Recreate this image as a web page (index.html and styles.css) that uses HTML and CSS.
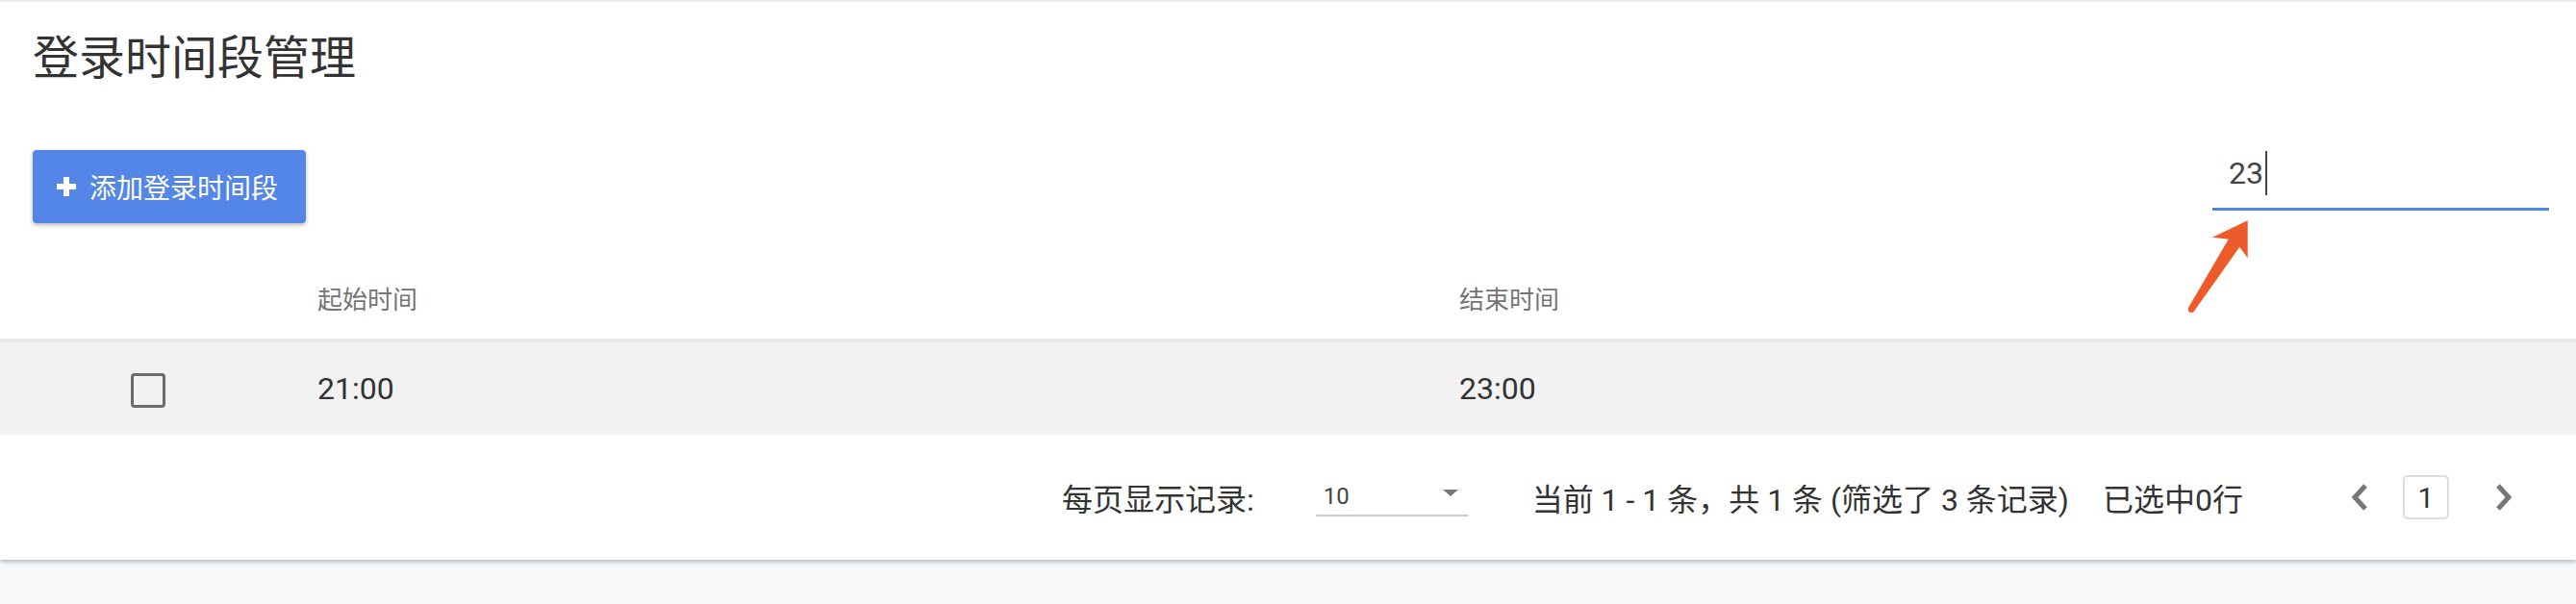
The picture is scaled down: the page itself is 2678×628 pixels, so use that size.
FILE: index.html
```html
<!DOCTYPE html>
<html lang="zh-CN">
<head>
<meta charset="utf-8">
<title>登录时间段管理</title>
<link rel="stylesheet" href="styles.css">
</head>
<body>
<div class="page">
  <section class="card">
    <h1 class="title">登录时间段管理</h1>
    <div class="toolbar">
      <button class="btn-add" type="button">
        <svg class="plus" width="20" height="20" viewBox="0 0 20 20"><path d="M7 0h6v7h7v6h-7v7H7v-7H0V7h7z" fill="#fff"/></svg>
        <span>添加登录时间段</span>
      </button>
      <div class="search">
        <span class="search-text">23</span><span class="caret"></span>
      </div>
    </div>

    <div class="table">
      <div class="thead">
        <div class="cell cell-check"></div>
        <div class="cell cell-text">起始时间</div>
        <div class="cell cell-text">结束时间</div>
      </div>
      <div class="trow">
        <div class="cell cell-check"><span class="checkbox"></span></div>
        <div class="cell cell-text">21:00</div>
        <div class="cell cell-text">23:00</div>
      </div>
    </div>

    <div class="footer">
      <span class="per-page">每页显示记录:</span>
      <div class="select"><span>10</span><span class="tri"></span></div>
      <span class="info">当前 1 - 1 条，共 1 条 (筛选了 3 条记录)</span>
      <span class="selected">已选中0行</span>
      <button class="nav prev" type="button"><svg width="20" height="30" viewBox="0 0 20 30"><polyline points="16,3 5,15 16,27" fill="none" stroke="#777" stroke-width="5"/></svg></button>
      <span class="page-num">1</span>
      <button class="nav next" type="button"><svg width="20" height="30" viewBox="0 0 20 30"><polyline points="4,3 15,15 4,27" fill="none" stroke="#777" stroke-width="5"/></svg></button>
    </div>

    <svg class="arrow" width="80" height="110" viewBox="0 0 80 110">
      <path d="M66.7 4.3 L30 21.7 L46.7 23.7 L5 95 Q4 99.5 8 100 Q10 100 11 98.5 L58.3 31.7 L66.7 43.3 Z" fill="#ee5a2a"/>
    </svg>
  </section>
</div>
</body>
</html>
```

FILE: styles.css
```css
* { box-sizing: border-box; }

html, body {
  margin: 0;
  padding: 0;
  background: #f7f8fa;
  font-family: Roboto, "Noto Sans CJK SC", sans-serif;
  color: #333;
}

.page {
  min-height: 628px;
  background: #f7f8fa;
}

.card {
  position: relative;
  background: #fff;
  border-top: 2px solid #ebebeb;
  box-shadow: 0 2px 4px rgba(0, 0, 0, 0.28);
}

.title {
  margin: 0;
  padding: 31px 0 0 34px;
  height: 86px;
  font-size: 48px;
  line-height: 56px;
  font-weight: 400;
  color: #333;
}

.toolbar {
  display: flex;
  justify-content: space-between;
  align-items: flex-start;
  margin-top: 68px;
  padding: 0 28px 0 34px;
  height: 76px;
}

.btn-add {
  display: flex;
  align-items: center;
  height: 76px;
  padding: 0 29px 0 25px;
  border: 0;
  border-radius: 4px;
  background: #5386e6;
  color: #fff;
  font-family: inherit;
  font-size: 28px;
  box-shadow: 0 2px 4px rgba(0, 0, 0, 0.28);
}

.plus {
  margin-right: 14px;
}

.search {
  width: 350px;
  height: 63px;
  padding: 7px 0 0 17px;
  border-bottom: 3px solid #4f86e0;
  display: flex;
  align-items: center;
  align-self: flex-start;
}

.search-text {
  font-size: 32px;
  line-height: 36px;
  color: #444;
  margin-top: -20px;
}

.caret {
  display: inline-block;
  width: 2px;
  height: 46px;
  background: #444;
  margin-left: 2px;
  margin-top: -20px;
}

.thead,
.trow {
  display: grid;
  grid-template-columns: 308px 1187px 1fr;
  align-items: center;
}

.thead {
  height: 120px;
  padding-top: 34px;
  font-size: 26px;
  color: #757575;
}

.trow {
  height: 100px;
  border-top: 4px solid #e9eaec;
  background: #f2f2f2;
  font-size: 32px;
  color: #333;
}

.cell-text {
  padding-left: 22px;
}

.cell-check {
  display: flex;
  justify-content: center;
}

.checkbox {
  display: block;
  width: 36px;
  height: 36px;
  border: 3px solid #6b6b6b;
  border-radius: 4px;
  margin-top: 4px;
}

.footer {
  display: flex;
  align-items: center;
  justify-content: flex-end;
  height: 130px;
  padding-right: 51px;
  font-size: 32px;
  color: #333;
}

.select {
  position: relative;
  width: 158px;
  height: 40px;
  margin-left: 64px;
  padding-left: 8px;
  border-bottom: 2px solid #ccc;
  font-size: 24px;
  color: #444;
  display: flex;
  align-items: center;
}

.tri {
  position: absolute;
  right: 10px;
  top: 12px;
  width: 0;
  height: 0;
  border-left: 8px solid transparent;
  border-right: 8px solid transparent;
  border-top: 7px solid #777;
}

.info {
  margin-left: 67px;
}

.selected {
  margin-left: 35px;
}

.nav {
  width: 48px;
  height: 46px;
  margin-left: 97px;
  padding: 0;
  border: 0;
  background: none;
  display: flex;
  align-items: center;
  justify-content: center;
}

.page-num {
  width: 48px;
  height: 46px;
  margin-left: 21px;
  border: 2px solid #ddd;
  border-radius: 5px;
  display: flex;
  align-items: center;
  justify-content: center;
  font-size: 30px;
}

.next {
  margin-left: 33px;
}

.arrow {
  position: absolute;
  left: 2270px;
  top: 223px;
}
```
